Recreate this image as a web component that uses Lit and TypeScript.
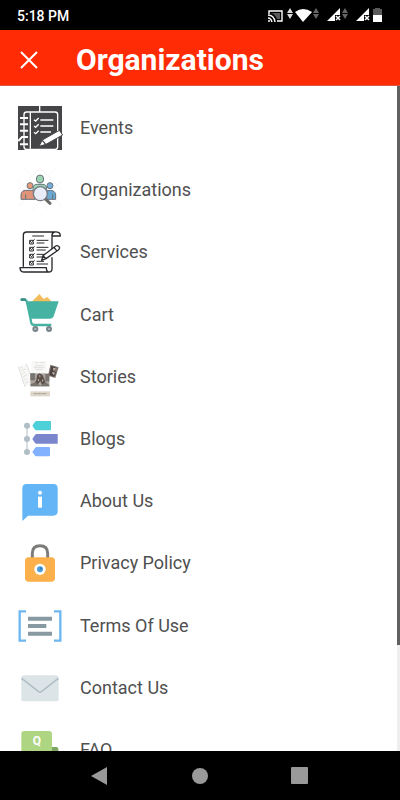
import { LitElement, html, svg, css, type TemplateResult } from "lit";
import { customElement } from "lit/decorators.js";

interface Entry {
  label: string;
  box: string;
  art: TemplateResult;
}

const entries: Entry[] = [
  {
    label: "Events",
    box: "0 0 180 180",
    art: svg`
      <rect x="24" y="24" width="132" height="132" fill="#454547"/>
      <rect x="42" y="42" width="101" height="112" rx="8" fill="none" stroke="#fff" stroke-width="4"/>
      <path d="M89 24V42M61 43V152" stroke="#fff" stroke-width="4"/>
      <path d="M30 60H54M30 79H54M30 98H54M25 129L36 117H54M30 139H54" fill="none" stroke="#fff" stroke-width="6"/>
      <path d="M91 66H130M91 84H130M91 102H123" stroke="#fff" stroke-width="4"/>
      <path d="M72 65L77 69L86 60M72 84L77 88L86 79M72 103L77 107L86 98" fill="none" stroke="#fff" stroke-width="4"/>
      <path d="M87 145L97 126L148 97L158 111L108 139Z" fill="#fff" stroke="#454547" stroke-width="3"/>
      <path d="M97 127L107 139" stroke="#454547" stroke-width="4"/>`,
  },
  {
    label: "Organizations",
    box: "0 0 180 180",
    art: svg`
      <path d="M40 24L156 140M90 24L156 90M26 60L116 150M140 24L26 138M90 24L26 88M156 60L66 150" stroke="#f3f3f3" stroke-width="2"/>
      <g stroke="#68727c" stroke-width="3">
        <path d="M69 104V85Q69 73 82 73H98Q110 73 110 87V104Z" fill="#9cd3b3"/>
        <ellipse cx="90" cy="57" rx="11" ry="12" fill="#9cd3b3"/>
        <path d="M33 118V103Q35 91 47 91H66Q76 95 76 118Z" fill="#df9379"/>
        <circle cx="60" cy="77" r="9" fill="#eb9a79"/>
        <path d="M105 118V97Q108 91 121 91Q134 91 137 103V118Z" fill="#6aa7d1"/>
        <circle cx="120" cy="77" r="9" fill="#74afd7"/>
        <path d="M47 103V118M128 103V118" />
        <path d="M105 116L120 130" stroke="#6c6966" stroke-width="9" stroke-linecap="round"/>
        <circle cx="91" cy="101" r="21" fill="#e7ecf6" stroke="#777c86" stroke-width="4"/>
      </g>`,
  },
  {
    label: "Services",
    box: "0 1 180 180",
    art: svg`
      <g fill="none" stroke="#29282c" stroke-width="4" stroke-linejoin="round" stroke-linecap="round">
        <path d="M40 134V39Q41 31 50 31H133Q151 29 151 43H126V91M126 108V142Q126 151 116 151H43Q30 151 30 138H109Q109 151 118 151M126 43Q125 33 134 31"/>
        <path d="M68 43H101M81 56H114M81 64H102M81 77H114M81 85H106M81 98H107M81 106H98M81 119H101M81 127H113" stroke-width="3"/>
        <path d="M70 56H59V67H70V61M70 77H59V88H70V82M70 98H59V109H70V103M70 119H59V130H70V124M61 59L65 63L73 54M61 80L65 84L73 75M61 101L65 105L73 96M61 122L65 126L73 117" stroke-width="3"/>
        <path d="M95 116L99 102L137 73Q143 70 148 76Q150 81 145 85L108 111ZM132 77L140 87M99 102L108 111" fill="#fff" stroke-width="4"/>
      </g>`,
  },
  {
    label: "Cart",
    box: "0 2 180 180",
    art: svg`
      <path d="M64 54L88 29L101 44L112 38L127 54Z" fill="#f4bd5b"/>
      <path d="M36 46H44Q49 46 51 54L62 105Q63 122 72 122H121" fill="none" stroke="#45b2a2" stroke-width="7" stroke-linecap="round"/>
      <path d="M49 51H146L131 96Q128 103 121 103H68Q61 103 59 96Z" fill="#45b2a2"/>
      <path d="M35 46H44" stroke="#3b8f86" stroke-width="8" stroke-linecap="round"/>
      <g fill="#b9c0c4" stroke="#77858b" stroke-width="6"><circle cx="76" cy="134" r="6"/><circle cx="117" cy="134" r="6"/></g>`,
  },
  {
    label: "Stories",
    box: "0 -4 180 180",
    art: svg`
      <path d="M25 55L49 46L69 104L45 116Z" fill="#f7f7f5"/>
      <path d="M31 59L36 57M34 67L46 62M38 76L44 73M39 85L51 80M43 94L50 91M46 104L56 99M25 55L45 116M49 46L61 78" stroke="#d3d2ce" stroke-width="2"/>
      <path d="M64 38H111V74H64Z" fill="#f8f8f6"/>
      <path d="M75 43H84M89 43H103M75 52H101M72 58H104M78 64H98" stroke="#d2d1cd" stroke-width="2"/>
      <path d="M61 75H118V114H61Z" fill="#aaa39a"/>
      <path d="M61 75H75V96H61ZM106 77H118V99H106Z" fill="#777571"/>
      <path d="M82 79L89 75L98 81L105 98L110 112H98L91 98L80 112H72L79 94Z" fill="#584f4b"/>
      <path d="M88 79L92 83L89 88ZM96 92L101 97L97 101ZM82 95L88 92L86 99Z" fill="#d2bbad"/>
      <path d="M62 108L76 102L91 112L106 102L118 110V114H62Z" fill="#77746d"/>
      <path d="M121 49L146 57L136 89L114 82Z" fill="#81756f"/>
      <path d="M124 53L137 57L130 67L139 72L132 85L118 80Z" fill="#494343"/>
      <path d="M129 58L137 60L131 68ZM126 71L136 73L130 80Z" fill="#d2b9ac"/>
      <rect x="61" y="129" width="59" height="15" fill="#ddd6c9"/>
      <path d="M71 136H110" stroke="#9b968d" stroke-width="3" stroke-dasharray="3 1"/>`,
  },
  {
    label: "Blogs",
    box: "0 -3 180 180",
    art: svg`
      <path d="M51 47V126" stroke="#cfd8dc" stroke-width="5"/>
      <g fill="#b0bec5"><circle cx="51" cy="47" r="9"/><circle cx="51" cy="87" r="9"/><circle cx="51" cy="126" r="9"/></g>
      <path d="M67 47L75 35Q77 33 80 33H120Q123 33 123 36V58Q123 61 120 61H80Q77 61 75 59Z" fill="#4dd0d7"/>
      <path d="M67 87L75 75Q77 72 80 72H143V101H80Q77 101 75 99Z" fill="#7986cb"/>
      <path d="M67 126L75 114Q77 111 80 111H117Q120 111 120 114V136Q120 139 117 139H80Q77 139 75 137Z" fill="#82b1ff"/>`,
  },
  {
    label: "About Us",
    box: "0 -2 180 180",
    art: svg`
      <path d="M37 148V50Q37 37 50 37H130Q143 37 143 50V119Q143 132 130 132H54Z" fill="#64b5f6"/>
      <circle cx="90" cy="63" r="6" fill="#fff"/><path d="M84 75H96V108H84Z" fill="#fff"/>`,
  },
  {
    label: "Privacy Policy",
    box: "0 184 180 180",
    art: svg`
      <path d="M67 260V245Q67 222 90 222Q113 222 113 245V260" fill="none" stroke="#7d7c7b" stroke-width="9"/>
      <rect x="45" y="257" width="90" height="73" rx="11" fill="#fcb04c"/>
      <circle cx="90" cy="293" r="17" fill="#fff"/><circle cx="90" cy="293" r="9" fill="#4b9ddc"/><circle cx="93" cy="290" r="3" fill="#2474b8"/>`,
  },
  {
    label: "Terms Of Use",
    box: "0 1 180 180",
    art: svg`
      <path d="M48 47H29V135H48M132 47H151V135H132" fill="none" stroke="#6cb7f0" stroke-width="7"/>
      <path d="M54 69H126M54 91H109M54 114H126" stroke="#8799a1" stroke-width="12"/>`,
  },
  {
    label: "Contact Us",
    box: "0 188 180 180",
    art: svg`
      <rect x="34" y="240" width="112" height="78" rx="8" fill="#dce4e8"/>
      <path d="M35 249L86 289Q90 292 94 289L145 249" fill="none" stroke="#b0bec5" stroke-width="5"/>`,
  },
  {
    label: "FAQ",
    box: "30 60 180 180",
    art: svg`
      <path d="M90 141H169Q175 141 175 148V206H90Z" fill="#7ba562"/>
      <rect x="64" y="93" width="92" height="72" rx="9" fill="#aed581"/>
      <text x="111" y="136" text-anchor="middle" font-size="36" font-weight="700" fill="#fff">Q</text>`,
  },
];

@customElement("app-root")
export class AppRoot extends LitElement {
  static styles = css`
    :host {
      display: flex;
      flex-direction: column;
      height: 100vh;
      background: #fff;
      font-family: Roboto, "Liberation Sans", sans-serif;
    }
    * { box-sizing: border-box; }
    svg { display: block; flex: none; }
    button { border: 0; padding: 0; background: none; color: inherit; cursor: pointer; }
    .status {
      flex: none;
      display: flex;
      align-items: center;
      justify-content: space-between;
      height: 30px;
      padding: 2px 15px 0 17px;
      background: #000;
      color: #fff;
      font-size: 14px;
      font-weight: 500;
    }
    .bar {
      flex: none;
      display: flex;
      align-items: center;
      gap: 27px;
      height: 56px;
      padding: 5px 9px 0;
      background: #ff2b04;
      border-bottom: 1px solid #d9583f;
      color: #fff;
    }
    .close { display: grid; place-items: center; width: 40px; height: 40px; }
    h1 { margin: 0; font-size: 30px; line-height: 40px; font-weight: 700; }
    .body { flex: 1; min-height: 0; display: flex; }
    .scroll { flex: 1; overflow: hidden auto; scrollbar-width: none; }
    ul {
      display: grid;
      grid-auto-rows: 1fr;
      height: 684px;
      margin: 11px 0;
      padding: 0;
      list-style: none;
    }
    a {
      display: flex;
      align-items: center;
      gap: 10px;
      height: 100%;
      padding: 0 10px;
      color: #505050;
      font-size: 18px;
      line-height: 24px;
      text-decoration: none;
    }
    .track { flex: none; width: 3px; background: #eee; }
    .thumb { height: 84%; background: #606060; }
    .nav {
      flex: none;
      display: flex;
      align-items: center;
      justify-content: center;
      gap: 60px;
      height: 49px;
      background: #000;
    }
    .key { display: grid; place-items: center; width: 40px; height: 40px; }
  `;

  render() {
    return html`
      <div class="status">
        <span>5:18 PM</span>
        <svg width="118" height="20" viewBox="0 0 118 20" fill="#fff" aria-hidden="true">
          <path d="M2 8V5H15V15H10M1 9Q7 9 8 16M1 12Q4 12 5 16" fill="none" stroke="#fff" stroke-width="1.4"/>
          <path d="M4 7H13V13H10Q8 8 4 7Z" opacity=".35"/>
          <circle cx="2" cy="15" r="1"/>
          <path d="M23 2L26 7H20ZM23 13L26 8H20Z" opacity=".85"/>
          <path d="M28 6Q36 0 45 6L36 16Z"/>
          <path d="M49 2L52 7H46ZM49 13L52 8H46Z" opacity=".4"/>
          <path d="M60 15L73 2V9H68V15Z"/>
          <path d="M69 10L73 14M73 10L69 14" stroke="#fff" stroke-width="1.5"/>
          <path d="M78 2L81 7H75ZM78 13L81 8H75Z" opacity=".4"/>
          <path d="M89 15L102 2V9H97V15Z"/>
          <path d="M98 10L102 14M102 10L98 14" stroke="#fff" stroke-width="1.5"/>
          <path d="M106 9V3H108V2H113V3H115V9Z" opacity=".35"/>
          <path d="M106 9H115V16H106Z"/>
        </svg>
      </div>
      <header class="bar">
        <button class="close" aria-label="Close">
          <svg width="20" height="20" viewBox="0 0 20 20" aria-hidden="true">
            <path d="M2 2L18 18M18 2L2 18" stroke="#fff" stroke-width="2"/>
          </svg>
        </button>
        <h1>Organizations</h1>
      </header>
      <div class="body">
        <nav class="scroll">
          <ul>
            ${entries.map(
              (e) => html`<li>
                <a href="#">
                  <svg width="60" height="60" viewBox=${e.box} aria-hidden="true">${e.art}</svg>
                  <span>${e.label}</span>
                </a>
              </li>`
            )}
          </ul>
        </nav>
        <div class="track"><div class="thumb"></div></div>
      </div>
      <footer class="nav">
        <button class="key" aria-label="Back">
          <svg width="20" height="20" viewBox="0 0 20 20" aria-hidden="true"><path d="M1 10L17 1V19Z" fill="#999"/></svg>
        </button>
        <button class="key" aria-label="Home">
          <svg width="20" height="20" viewBox="0 0 20 20" aria-hidden="true"><circle cx="10" cy="10" r="8" fill="#999"/></svg>
        </button>
        <button class="key" aria-label="Recent apps">
          <svg width="20" height="20" viewBox="0 0 20 20" aria-hidden="true"><rect x="1" y="1" width="17" height="17" rx="1" fill="#999"/></svg>
        </button>
      </footer>
    `;
  }
}
